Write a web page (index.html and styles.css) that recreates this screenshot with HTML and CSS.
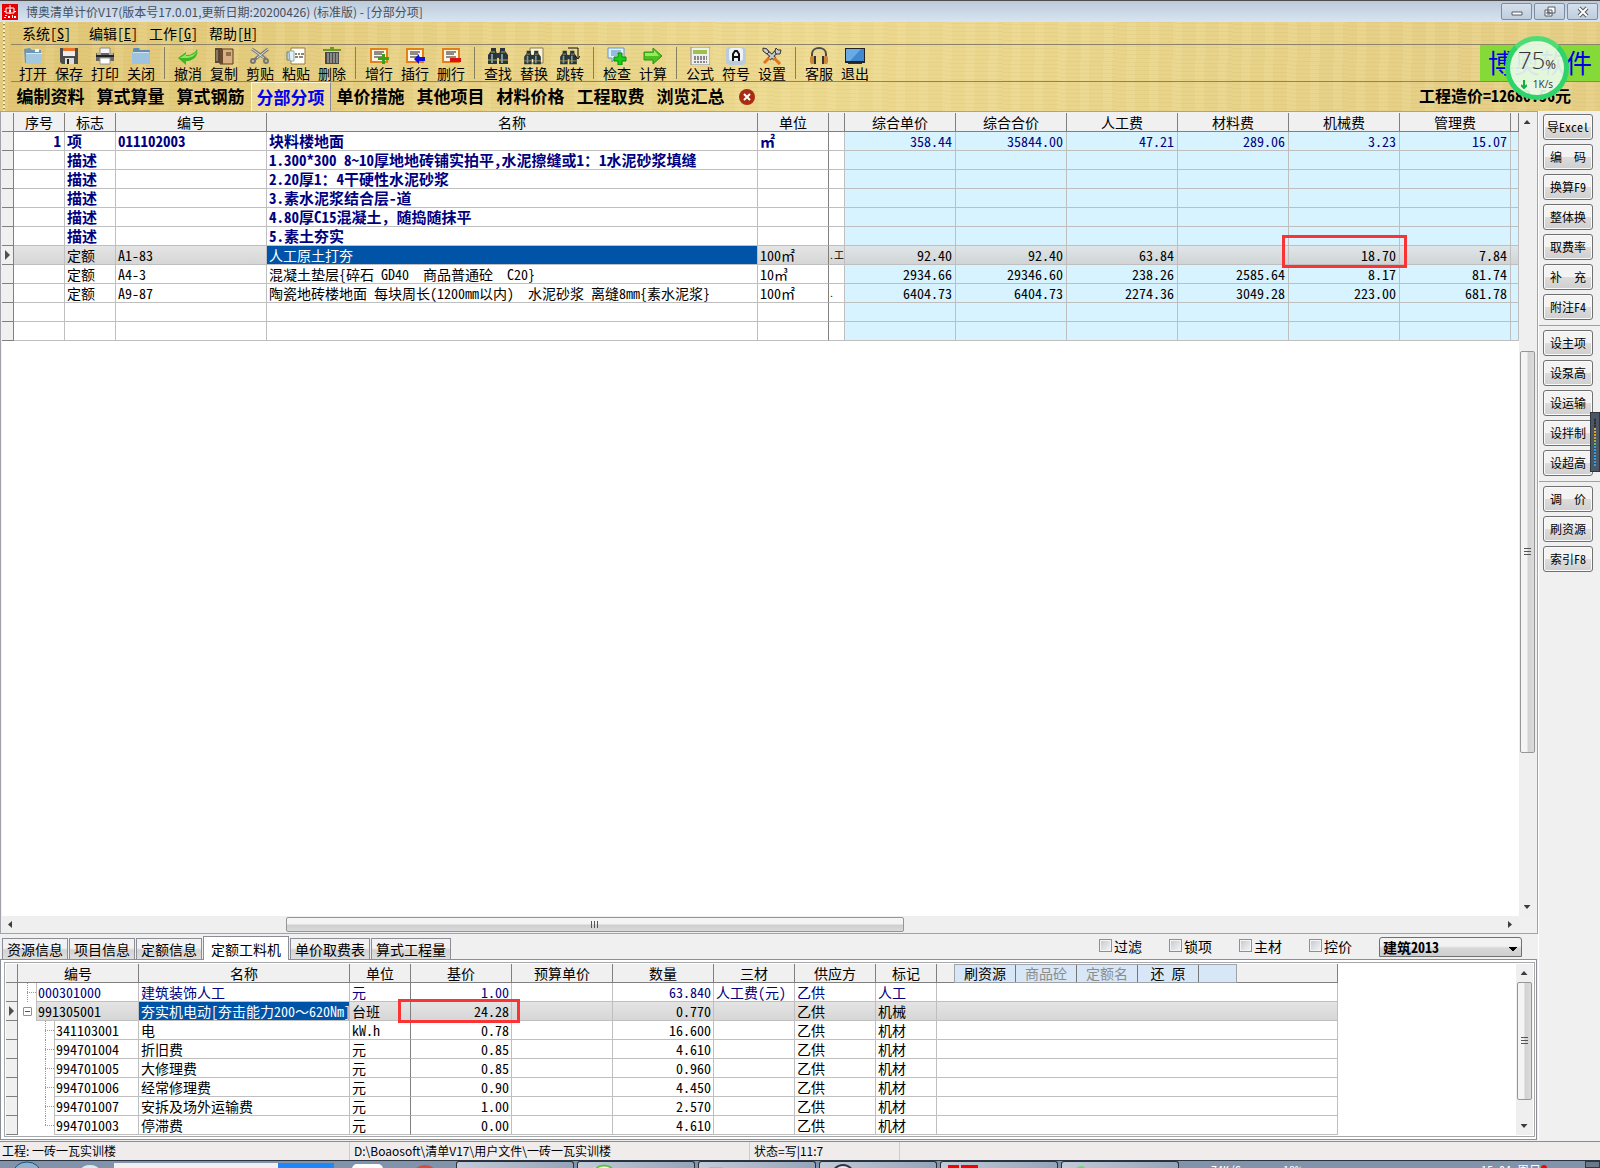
FILE: index.html
```html
<!DOCTYPE html>
<html lang="zh-CN">
<head>
<meta charset="utf-8">
<title>博奥清单计价V17</title>
<link rel="stylesheet" href="styles.css">
</head>
<body>
<svg class="sprite" aria-hidden="true">
  <symbol id="folder" viewBox="0 0 20 18"><path d="M2 3V2l1-1h5l1 2h9l1 1v12l-1 1H3l-1-1z" fill="#5e8db0"/><path d="M1 5h18v11l-1 1H2l-1-1z" fill="#9dc3de"/><path d="M2 5h16v1H2z" fill="#cfe3f1"/></symbol>
  <symbol id="open" viewBox="0 0 20 18"><path d="M1 2l6-1 2 2h9v13H2z" fill="#6d97b5"/><path d="M3 6h16l-1 11H3z" fill="#a4c8e1"/><path d="M12 2h4v3h-4z" fill="#eef5fa"/><path d="M3 6h16v1H3z" fill="#d6e8f4"/></symbol>
  <symbol id="save" viewBox="0 0 20 18"><path d="M1 1h18v16H3l-2-2z" fill="#4c4c4c"/><path d="M4 1h12v8H4z" fill="#eee"/><path d="M4 1h12v3H4z" fill="#e8742c"/><path d="M6 11h9v6H6z" fill="#ddd"/><path d="M8 12h2v5H8z" fill="#222"/></symbol>
  <symbol id="print" viewBox="0 0 20 18"><path d="M5 1h10v6H5z" fill="#f4f4f4" stroke="#888"/><path d="M1 6h18v8H1z" fill="#666"/><path d="M1 8h18v2H1z" fill="#222"/><path d="M5 11h10v6H5z" fill="#fff" stroke="#999"/><path d="M2 6h4v2H2zM14 6h4v2h-4z" fill="#aaa"/></symbol>
  <symbol id="undo" viewBox="0 0 20 18"><path d="M0 11l8-6v3c5 0 9-2 11-6 2 7-4 12-11 12v4z" fill="#3eb81f"/><path d="M2 11l6-4v2c5 0 9-2 11-5-2 5-6 7-11 7z" fill="#8fe568"/></symbol>
  <symbol id="copy" viewBox="0 0 20 18"><path d="M1 1h7v15H1z" fill="#5b4a3c"/><path d="M2 3h2v11H2z" fill="#8b7764"/><path d="M6 2h13v15H6z" fill="#d8b083" stroke="#5a3b1d"/><path d="M6 2h3v15H6z" fill="#6a4a2d"/><path d="M12 6h5M12 8h5" stroke="#4a2c10"/></symbol>
  <symbol id="cut" viewBox="0 0 20 18"><path d="M2 2l14 10M18 2L4 13" stroke="#7d7d7d" stroke-width="3"/><path d="M2 2l12 9M18 2L7 11" stroke="#dedede"/><circle cx="3" cy="14" r="2" fill="none" stroke="#777" stroke-width="2"/><circle cx="16" cy="14" r="2" fill="none" stroke="#777" stroke-width="2"/></symbol>
  <symbol id="paste" viewBox="0 0 20 18"><path d="M5 1h14v16H5z" fill="#fffef4" stroke="#9c7a3c"/><path d="M1 5h4v8H1z" fill="#bcd0de" stroke="#6c8294"/><path d="M3 4h5v10H4z" fill="#e6f0f7" stroke="#8aa"/><path d="M9 7h2m1 0h2m1 0h3M9 10h3m1 0h4" stroke="#111"/></symbol>
  <symbol id="trash" viewBox="0 0 20 18"><path d="M1 2h18v2H1zM8 0h4v2H8z" fill="#6b9a22"/><path d="M3 5h14v12H3z" fill="#4a4a4a"/><path d="M6 6v10M9 6v10M12 6v10M15 6v10" stroke="#c8c8c8"/></symbol>
  <symbol id="row" viewBox="0 0 20 18"><path d="M2 2h16v13H2z" fill="#fff5e4" stroke="#e2801a" stroke-width="2"/><path d="M5 5h10M5 7h8M5 10h10" stroke="#222"/></symbol>
  <symbol id="rowadd" viewBox="0 0 20 18"><use href="#row"/><path d="M13 7h3v3h4v3h-4v4h-3v-4H9v-3h4z" fill="#3aa11b"/></symbol>
  <symbol id="rowins" viewBox="0 0 20 18"><use href="#row"/><path d="M9 12l5-5v3h6v4h-6v3z" fill="#1010e0"/></symbol>
  <symbol id="rowdel" viewBox="0 0 20 18"><use href="#row"/><path d="M9 11h11v4H9z" fill="#e01010"/></symbol>
  <symbol id="bino" viewBox="0 0 20 18"><path d="M3 1h5v3l1 3v10H0V8l3-4zM12 1h5v3l3 4v9h-9V7l1-3z" fill="#27343b"/><path d="M8 6h4v5H8z" fill="#2c3a40"/><path d="M3 5h4M13 5h4M0 13h9M11 13h9" stroke="#b3a53a"/><path d="M4 7v9M14 7v9" stroke="#7d98a4" stroke-width="2"/></symbol>
  <symbol id="replace" viewBox="0 0 20 18"><path d="M6 1h13v15H6z" fill="#fff4cf" stroke="#8a7f5a"/><svg x="0" y="3" width="17" height="15"><use href="#bino"/></svg></symbol>
  <symbol id="jump" viewBox="0 0 20 18"><svg x="0" y="3" width="17" height="15"><use href="#bino"/></svg><path d="M8 1h10v10M15 9l3 3 2-3" fill="none" stroke="#111"/></symbol>
  <symbol id="check" viewBox="0 0 20 18"><path d="M1 1h16v10H8l-3 4v-4H1z" fill="#e4f1fb" stroke="#5d97c9"/><path d="M4 4h10M4 6h10M4 8h6" stroke="#4a86bb"/><path d="M11 6h4v4h4v4h-4v4h-4v-4H7v-4h4z" fill="#18d018" stroke="#0b8a0b"/></symbol>
  <symbol id="go" viewBox="0 0 20 18"><path d="M1 5h9V1l9 8-9 8v-4H1z" fill="#4cc11f" stroke="#2f9114"/><path d="M2 6h9V3l5 6H2z" fill="#98e866"/></symbol>
  <symbol id="calc" viewBox="0 0 20 18"><path d="M1 0h19v18H1z" fill="#efefef" stroke="#888"/><path d="M3 3h14v4H3z" fill="#9cc24c"/><path d="M4 10h13M4 12h13M4 15h13" stroke="#888" stroke-width="2" stroke-dasharray="2 1"/></symbol>
  <symbol id="sign" viewBox="0 0 20 18"><rect x="0" y="0" width="20" height="18" rx="4" fill="#b9cbdc"/><rect x="3" y="1" width="14" height="13" rx="3" fill="#edf3f8"/><path d="M7 14V7l2-3h2l2 3v7M7 10h6" fill="none" stroke="#111" stroke-width="2"/></symbol>
  <symbol id="tools" viewBox="0 0 20 18"><path d="M3 3l10 9M16 3l-9 9" stroke="#444" stroke-width="4"/><path d="M3 3l10 9M16 3l-9 9" stroke="#ccc" stroke-width="2"/><path d="M12 11l6 6M7 11l-5 5" stroke="#e4731d" stroke-width="3"/><path d="M1 1l4 1 2 3-2 2-4-3zM14 1l2 2 3 0-1 4-4 0-1-3z" fill="#ccc" stroke="#333"/></symbol>
  <symbol id="phone" viewBox="0 0 20 18"><path d="M3 12V7c0-8 14-8 14 0v5" fill="none" stroke="#4b4b4b" stroke-width="2"/><rect x="1" y="9" width="5" height="8" rx="2" fill="#c9863c"/><rect x="14" y="9" width="5" height="8" rx="2" fill="#c9863c"/><path d="M5 9h2v8H5zM13 9h2v8h-2z" fill="#333"/></symbol>
  <symbol id="screen" viewBox="0 0 20 18"><path d="M0 1h20v15H0z" fill="#222"/><path d="M1 2h18v12H1z" fill="#4089cf"/><path d="M1 2h15L5 14H1z" fill="#69abe4"/><path d="M3 16h14v1H3z" fill="#333"/></symbol>
</svg>

<header>
  <div class="titlebar">
    <svg class="appicon" viewBox="0 0 16 16"><path d="M0 0h16v16H0z" fill="#e80000"/><path d="M4 4h8v5H4zM8 1v9" fill="none" stroke="#fff"/><path d="M2 7h2v1H2zM12 7h2v1h-2zM7 6h2v2H7zM3 11h2v1H3zM2 13h2v1H2zM6 12h2v2H6zM10 11h1v3h-1zM12 12h2v2h-2z" fill="#fff"/></svg>
    <span class="caption">博奥清单计价V17(版本号17.0.01,更新日期:20200426) (标准版) - [分部分项]</span>
    <button class="win" aria-label="最小化"><svg viewBox="0 0 16 12"><path d="M3 6h10v3H3z" fill="#fff" stroke="#555b66"/></svg></button>
    <button class="win" aria-label="还原"><svg viewBox="0 0 16 12"><path d="M6 1h7v6H6zM3 4h7v6H3z" fill="#fff" stroke="#555b66"/><path d="M5 6h3v2H5z" fill="none" stroke="#555b66"/></svg></button>
    <button class="win" aria-label="关闭"><svg viewBox="0 0 16 12"><path d="M4 2l8 8M12 2l-8 8" stroke="#555b66" stroke-width="4"/><path d="M4 2l8 8M12 2l-8 8" stroke="#fff" stroke-width="2"/></svg></button>
  </div>
  <div class="gold">
    <div class="grip"></div>
    <div class="bars">
      <nav class="menu"><a href="#">系统[<u>S</u>]</a><a href="#">编辑[<u>E</u>]</a><a href="#">工作[<u>G</u>]</a><a href="#">帮助[<u>H</u>]</a></nav>
      <div class="tools">
        <div class="group"><button><svg><use href="#open"/></svg>打开</button><button><svg><use href="#save"/></svg>保存</button><button><svg><use href="#print"/></svg>打印</button><button><svg><use href="#folder"/></svg>关闭</button></div>
        <div class="group"><button><svg><use href="#undo"/></svg>撤消</button><button><svg><use href="#copy"/></svg>复制</button><button><svg><use href="#cut"/></svg>剪贴</button><button><svg><use href="#paste"/></svg>粘贴</button><button><svg><use href="#trash"/></svg>删除</button></div>
        <div class="group"><button><svg><use href="#rowadd"/></svg>增行</button><button><svg><use href="#rowins"/></svg>插行</button><button><svg><use href="#rowdel"/></svg>删行</button></div>
        <div class="group"><button><svg><use href="#bino"/></svg>查找</button><button><svg><use href="#replace"/></svg>替换</button><button><svg><use href="#jump"/></svg>跳转</button></div>
        <div class="group"><button><svg><use href="#check"/></svg>检查</button><button><svg><use href="#go"/></svg>计算</button></div>
        <div class="group"><button><svg><use href="#calc"/></svg>公式</button><button><svg><use href="#sign"/></svg>符号</button><button><svg><use href="#tools"/></svg>设置</button></div>
        <div class="group"><button><svg><use href="#phone"/></svg>客服</button><button><svg><use href="#screen"/></svg>退出</button></div>
        <div class="logo">博奥软件
          <div class="meter"><div class="load">75<small>%</small></div><div class="rate"><svg viewBox="0 0 6 9"><path d="M3 0v8M0 5l3 3 3-3" fill="none" stroke="#10b040" stroke-width="2"/></svg>1K/s</div></div>
        </div>
      </div>
      <nav class="sections"><a href="#">编制资料</a><a href="#">算式算量</a><a href="#">算式钢筋</a><a href="#" class="on">分部分项</a><a href="#">单价措施</a><a href="#">其他项目</a><a href="#">材料价格</a><a href="#">工程取费</a><a href="#">浏览汇总</a>
        <button class="close" aria-label="关闭页"><svg viewBox="0 0 16 16"><circle cx="8" cy="8" r="8" fill="#a82c12"/><path d="M5 5l6 6M11 5l-6 6" stroke="#fff" stroke-width="2"/></svg></button>
        <strong class="total">工程造价=12680.56元</strong>
      </nav>
    </div>
  </div>
</header>

<main>
  <div class="work">
    <section class="upper">
      <div class="view">
        <table class="grid main">
          <colgroup><col class="w12"><col class="w51"><col class="w51"><col class="w151"><col class="w491"><col class="w71"><col class="w16"><col class="w111"><col class="w111"><col class="w111"><col class="w111"><col class="w111"><col class="w111"><col></colgroup>
          <thead><tr><th></th><th>序号</th><th>标志</th><th>编号</th><th>名称</th><th>单位</th><th></th><th>综合单价</th><th>综合合价</th><th>人工费</th><th>材料费</th><th>机械费</th><th>管理费</th><th></th></tr></thead>
          <tbody>
            <tr class="item"><th></th><td class="n">1</td><td>项</td><td>011102003</td><td>块料楼地面</td><td>㎡</td><td></td><td>358.44</td><td>35844.00</td><td>47.21</td><td>289.06</td><td>3.23</td><td>15.07</td><td></td></tr>
            <tr class="item"><th></th><td></td><td>描述</td><td></td><td>1.300*300 8~10厚地地砖铺实拍平,水泥擦缝或1：1水泥砂浆填缝</td><td></td><td></td><td></td><td></td><td></td><td></td><td></td><td></td><td></td></tr>
            <tr class="item"><th></th><td></td><td>描述</td><td></td><td>2.20厚1：4干硬性水泥砂浆</td><td></td><td></td><td></td><td></td><td></td><td></td><td></td><td></td><td></td></tr>
            <tr class="item"><th></th><td></td><td>描述</td><td></td><td>3.素水泥浆结合层-道</td><td></td><td></td><td></td><td></td><td></td><td></td><td></td><td></td><td></td></tr>
            <tr class="item"><th></th><td></td><td>描述</td><td></td><td>4.80厚C15混凝土，随捣随抹平</td><td></td><td></td><td></td><td></td><td></td><td></td><td></td><td></td><td></td></tr>
            <tr class="item"><th></th><td></td><td>描述</td><td></td><td>5.素土夯实</td><td></td><td></td><td></td><td></td><td></td><td></td><td></td><td></td><td></td></tr>
            <tr class="current"><th><i class="pointer"></i></th><td></td><td>定额</td><td>A1-83</td><td class="picked">人工原土打夯</td><td>100㎡</td><td class="peek">.工</td><td>92.40</td><td>92.40</td><td>63.84</td><td></td><td class="marked">18.70<span class="mark"></span></td><td>7.84</td><td></td></tr>
            <tr><th></th><td></td><td>定额</td><td>A4-3</td><td>混凝土垫层{碎石 GD40  商品普通砼  C20}</td><td>10㎥</td><td></td><td>2934.66</td><td>29346.60</td><td>238.26</td><td>2585.64</td><td>8.17</td><td>81.74</td><td></td></tr>
            <tr><th></th><td></td><td>定额</td><td>A9-87</td><td>陶瓷地砖楼地面 每块周长(1200mm以内)  水泥砂浆 离缝8mm{素水泥浆}</td><td>100㎡</td><td class="peek">.</td><td>6404.73</td><td>6404.73</td><td>2274.36</td><td>3049.28</td><td>223.00</td><td>681.78</td><td></td></tr>
            <tr><th></th><td></td><td></td><td></td><td></td><td></td><td></td><td></td><td></td><td></td><td></td><td></td><td></td><td></td></tr>
            <tr><th></th><td></td><td></td><td></td><td></td><td></td><td></td><td></td><td></td><td></td><td></td><td></td><td></td><td></td></tr>
          </tbody>
        </table>
      </div>
      <div class="vbar"><i class="up"></i><div class="track before"></div><div class="thumb"><i class="lines"></i></div><div class="track after"></div><i class="down"></i></div>
      <div class="hbar"><i class="prev"></i><div class="track before"></div><div class="thumb"><i class="lines"></i></div><div class="track after"></div><i class="next"></i></div>
    </section>

    <div class="tabstrip">
      <div class="tabs"><button>资源信息</button><button>项目信息</button><button>定额信息</button><button class="on">定额工料机</button><button>单价取费表</button><button>算式工程量</button></div>
      <div class="filters"><label><input type="checkbox">过滤</label><label><input type="checkbox">锁项</label><label><input type="checkbox">主材</label><label><input type="checkbox">控价</label>
      <select aria-label="定额库"><option>建筑2013</option></select></div>
    </div>

    <section class="pane"><div class="inner">
      <div class="view">
      <table class="grid detail">
        <colgroup><col class="w12"><col class="w121"><col class="w211"><col class="w61"><col class="w101"><col class="w101"><col class="w101"><col class="w81"><col class="w81"><col class="w61"><col class="w401"></colgroup>
        <thead><tr><th></th><th>编号</th><th>名称</th><th>单位</th><th>基价</th><th>预算单价</th><th>数量</th><th>三材</th><th>供应方</th><th>标记</th><th class="actions"><div><button>刷资源</button><button disabled>商品砼</button><button disabled>定额名</button><button>还 原</button></div></th></tr></thead>
        <tbody>
          <tr class="labor"><th></th><td class="tree"><div><span class="branch first"></span><span class="code">000301000</span></div></td><td>建筑装饰人工</td><td>元</td><td>1.00</td><td></td><td>63.840</td><td>人工费(元)</td><td>乙供</td><td>人工</td><td></td></tr>
          <tr class="current"><th><i class="pointer"></i></th><td class="tree"><div><span class="branch root"><i class="minus"></i></span><span class="code">991305001</span></div></td><td class="picked">夯实机电动[夯击能力200～620Nm]</td><td>台班</td><td class="marked">24.28<span class="mark"></span></td><td></td><td>0.770</td><td></td><td>乙供</td><td>机械</td><td></td></tr>
          <tr><th></th><td class="tree"><div><span class="branch leaf"></span><span class="code">341103001</span></div></td><td>电</td><td>kW.h</td><td>0.78</td><td></td><td>16.600</td><td></td><td>乙供</td><td>机材</td><td></td></tr>
          <tr><th></th><td class="tree"><div><span class="branch leaf"></span><span class="code">994701004</span></div></td><td>折旧费</td><td>元</td><td>0.85</td><td></td><td>4.610</td><td></td><td>乙供</td><td>机材</td><td></td></tr>
          <tr><th></th><td class="tree"><div><span class="branch leaf"></span><span class="code">994701005</span></div></td><td>大修理费</td><td>元</td><td>0.85</td><td></td><td>0.960</td><td></td><td>乙供</td><td>机材</td><td></td></tr>
          <tr><th></th><td class="tree"><div><span class="branch leaf"></span><span class="code">994701006</span></div></td><td>经常修理费</td><td>元</td><td>0.90</td><td></td><td>4.450</td><td></td><td>乙供</td><td>机材</td><td></td></tr>
          <tr><th></th><td class="tree"><div><span class="branch leaf"></span><span class="code">994701007</span></div></td><td>安拆及场外运输费</td><td>元</td><td>1.00</td><td></td><td>2.570</td><td></td><td>乙供</td><td>机材</td><td></td></tr>
          <tr><th></th><td class="tree"><div><span class="branch leaf last"></span><span class="code">994701003</span></div></td><td>停滞费</td><td>元</td><td>0.00</td><td></td><td>4.610</td><td></td><td>乙供</td><td>机材</td><td></td></tr>
        </tbody>
      </table>
      </div>
      <div class="vbar"><i class="up"></i><div class="thumb"><i class="lines"></i></div><div class="track after"></div><i class="down"></i></div>
    </div></section>
  </div>

  <aside>
    <div class="stack"><button>导Excel</button><button>编　码</button><button>换算F9</button><button>整体换</button><button>取费率</button><button>补　充</button><button>附注F4</button></div>
    <div class="stack"><button>设主项</button><button>设泵高</button><button>设运输</button><button>设拌制</button><button>设超高</button><div class="level"><i></i></div></div>
    <div class="stack"><button>调　价</button><button>刷资源</button><button>索引F8</button></div>
  </aside>
</main>

<footer class="status"><span class="project">工程: 一砖一瓦实训楼</span><span class="path">D:\Boaosoft\清单V17\用户文件\一砖一瓦实训楼</span><span class="state">状态=写|11:7</span><span></span></footer>
<div class="taskbar">
  <svg class="launch" viewBox="0 0 114 8"><ellipse cx="27" cy="13" rx="14" ry="12" fill="#8fb3cf" stroke="#1d4f7c"/><ellipse cx="90" cy="9" rx="9" ry="5" fill="#d5ecf5"/></svg>
  <div class="search"></div><div class="go"></div>
  <svg class="pins" viewBox="0 0 122 8"><rect x="18" y="3" width="31" height="12" rx="5" fill="#fff"/><circle cx="91" cy="18" r="14" fill="#d94b3c"/></svg>
  <div class="task"></div>
  <div class="task"><svg viewBox="0 0 60 7"><ellipse cx="25" cy="10" rx="13" ry="6" fill="#eef5ee"/><path d="M18 6q8-5 16 0" stroke="#5ac43c" stroke-width="2" fill="none"/></svg></div>
  <div class="task"><svg viewBox="0 0 60 7"><path d="M10 5h14v2H10z" fill="#cdb36b"/></svg></div>
  <div class="task"><svg viewBox="0 0 60 7"><circle cx="23" cy="14" r="11" fill="#e8e8ee" stroke="#334" stroke-width="2"/></svg></div>
  <div class="task"><svg viewBox="0 0 60 7"><path d="M7 3h11v4H7zM20 3h17v4H20z" fill="#f00"/></svg></div>
  <div class="task"><svg viewBox="0 0 60 7"><circle cx="19" cy="10" r="6" fill="#5be36c"/></svg></div>
  <div class="tray"><span>74K/S</span><span>18%</span><span class="clock">15:04 周日</span><i class="dot"></i></div><div class="desk"></div>
</div>
</body>
</html>
```
FILE: styles.css
```css
* { box-sizing: border-box; }

body {
  margin: 0;
  min-height: 100vh;
  display: flex;
  flex-direction: column;
  overflow: hidden;
  background: #f0f0f0;
  color: #000;
  font: 14px/18px "Noto Sans Mono CJK SC", "Noto Sans CJK SC", "Liberation Mono", monospace;
}

button, select, input { font: inherit; color: inherit; margin: 0; }
button { padding: 0; border: 0; background: none; white-space: nowrap; }
a { color: inherit; text-decoration: none; white-space: nowrap; }
.sprite { display: none; }

/* title bar */
.titlebar {
  height: 22px;
  display: flex;
  align-items: center;
  gap: 2px;
  padding: 0 2px;
  border-top: 1px solid #4d4d50;
  background: linear-gradient(#bccada, #d8e4f1);
}
.appicon { width: 16px; height: 16px; }
.caption {
  flex: 1;
  padding-left: 6px;
  color: #44505e;
  font: 12px/18px "Noto Sans CJK SC", sans-serif;
}
.win {
  width: 31px;
  height: 17px;
  border: 1px solid #7d8ca0;
  border-radius: 2px;
  background: linear-gradient(#d5e0ec, #bfcddd);
  display: grid;
  place-items: center;
}
.win svg { width: 16px; height: 12px; }

/* gold tool area */
.gold {
  display: flex;
  background:
    repeating-linear-gradient(1deg, rgba(160, 120, 30, .06) 0 1px, transparent 1px 4px),
    repeating-linear-gradient(91deg, rgba(255, 245, 190, .12) 0 9px, transparent 9px 23px),
    linear-gradient(90deg, #e0c676, #ecd990 50%, #e4cd84);
}
.grip {
  width: 11px;
  background: repeating-linear-gradient(#f8edc2 0 2px, #a58e4d 2px 3px, transparent 3px 4px) 3px 0 / 2px 100% no-repeat;
}
.bars { flex: 1; min-width: 0; }
.menu {
  display: flex;
  gap: 11px;
  height: 23px;
  padding: 2px 11px 0;
  border-bottom: 1px solid #8d8467;
}
.menu a:first-child { margin-right: 7px; }
.tools {
  display: flex;
  height: 37px;
  padding-left: 4px;
  border-bottom: 1px solid #8d8467;
}
.group { display: flex; }
.group + .group::before {
  content: "";
  width: 1px;
  height: 32px;
  margin: 2px 5px;
  background: #85805f;
}
.group button {
  width: 36px;
  display: flex;
  flex-direction: column;
  align-items: center;
  font-size: 14px;
  line-height: 16px;
}
.group svg { width: 20px; height: 18px; margin-top: 2px; }
.logo {
  position: relative;
  margin-left: auto;
  width: 120px;
  height: 36px;
  background: #86da37;
  color: #0000e8;
  font-size: 26px;
  line-height: 34px;
  text-align: center;
  white-space: nowrap;
}
.meter {
  position: absolute;
  z-index: 2;
  left: 25px;
  top: -9px;
  width: 64px;
  height: 64px;
  border-radius: 50%;
  border: 5px solid #2ed36a;
  border-top-color: #4fdc75;
  background: rgba(236, 250, 232, .92);
  color: #333;
  font-family: "Open Sans", sans-serif;
}
.load { padding-top: 6px; font-size: 24px; line-height: 26px; font-weight: 300; }
.load small { font-size: 13px; font-weight: 400; }
.rate { display: flex; justify-content: center; align-items: center; gap: 6px; font-size: 10px; line-height: 14px; }
.rate svg { width: 6px; height: 9px; }
.sections {
  display: flex;
  align-items: stretch;
  height: 29px;
  font-size: 17px;
  line-height: 27px;
  font-weight: bold;
}
.sections a { width: 80px; padding-right: 1px; text-align: center; }
.sections .on {
  color: #0000f0;
  border: 1px solid #fff7d8;
  border-right-color: #8d8aa0;
  border-bottom: 0;
  background: rgba(255, 243, 200, .35);
}
.close { display: grid; place-items: center; width: 32px; }
.close svg { width: 16px; height: 16px; }
.total { margin: 0 29px 0 auto; font-size: 16px; }

/* work area */
main { flex: 1; display: flex; min-height: 0; }
.work { flex: 1; min-width: 0; display: flex; flex-direction: column; margin-bottom: 1px; }
.upper {
  flex: 1;
  display: grid;
  grid-template: 1fr 17px / 1fr 18px;
  padding: 1px 0 0 1px;
  border: 1px solid #a0a3ac;
}
.view { background: #fff; min-width: 0; overflow: hidden; }

.grid { border-collapse: separate; border-spacing: 0; table-layout: fixed; }
.main { width: 100%; }
.grid th, .grid td {
  height: 19px;
  padding: 0 3px 0 2px;
  border-right: 1px solid #bfbfbf;
  border-bottom: 1px solid #bfbfbf;
  font-weight: normal;
  line-height: 18px;
  white-space: pre;
  text-align: left;
}
.grid th {
  padding: 0;
  background: #f0f0f0;
  border-color: #808080;
  text-align: center;
}
.w12 { width: 12px; } .w16 { width: 16px; } .w51 { width: 51px; } .w61 { width: 61px; }
.w71 { width: 71px; } .w81 { width: 81px; } .w101 { width: 101px; } .w111 { width: 111px; }
.w121 { width: 121px; } .w151 { width: 151px; } .w211 { width: 211px; } .w401 { width: 401px; }
.w491 { width: 491px; }

.main td:nth-child(n+8) { background: #d7f3ff; text-align: right; }
.main td:nth-child(6) { border-right-color: #808080; }
.item td { color: #000080; font-weight: bold; font-size: 15px; }
.item td:nth-child(n+8) { font-weight: normal; font-size: 14px; }
.item .n { text-align: right; }
.grid .peek { padding: 0; font-size: 10px; }
.grid .current td { background: linear-gradient(#e4e4e4, #d6d6d6); }
.main .current td:nth-child(n+8) { background: linear-gradient(#e0e5e7, #cfd5d7); }
.grid .current .picked { background: #0054a8; color: #fff; }
.detail .picked { overflow: hidden; }
.pointer {
  display: block;
  width: 5px;
  height: 10px;
  margin: 0 3px;
  background: #505050;
  clip-path: polygon(0 0, 100% 50%, 0 100%);
}
.marked { position: relative; }
.mark {
  position: absolute;
  z-index: 1;
  inset: -11px -8px -4px -7px;
  border: 3px solid #fa3434;
}
.detail .mark { inset: -3px -9px -3px -13px; }

/* scroll bars */
.vbar, .hbar { display: flex; align-items: center; background: #efefef; }
.vbar { flex-direction: column; width: 17px; padding-right: 1px; }
.hbar { height: 17px; padding: 1px 0; }
.track { flex: 1; }
.vbar .thumb { width: 15px; display: grid; place-items: center; border: 1px solid #969696; border-radius: 2px; background: linear-gradient(90deg, #f4f4f4 45%, #d2d2d2 55%, #dcdcdc); }
.hbar .thumb { height: 100%; display: grid; place-items: center; border: 1px solid #969696; border-radius: 2px; background: linear-gradient(#f4f4f4 45%, #cfcfcf 55%, #dadada); }
.vbar .lines { width: 7px; height: 8px; background: repeating-linear-gradient(#555 0 1px, transparent 1px 3px); }
.hbar .lines { width: 8px; height: 7px; background: repeating-linear-gradient(90deg, #555 0 1px, transparent 1px 3px); }
.up, .down { width: 7px; height: 4px; margin: 7px 0; background: #3c3c3c; clip-path: polygon(50% 0, 100% 100%, 0 100%); }
.down { clip-path: polygon(0 0, 100% 0, 50% 100%); }
.prev, .next { width: 4px; height: 7px; margin: 0 7px 0 6px; background: #3c3c3c; clip-path: polygon(100% 0, 100% 100%, 0 50%); }
.next { clip-path: polygon(0 0, 100% 50%, 0 100%); }
.upper .vbar .before { flex: 220; }
.upper .vbar .thumb { flex: 401; }
.upper .vbar .after { flex: 145; }
.upper .hbar .before { flex: 267; }
.upper .hbar .thumb { flex: 616; }
.upper .hbar .after { flex: 598; }
.pane .thumb { flex: 118; }
.pane .after { flex: 17; }

/* detail tabs */
.tabstrip { display: flex; justify-content: space-between; height: 25px; padding: 0 16px 0 2px; }
.tabs { display: flex; align-items: flex-end; }
.tabs button {
  height: 21px;
  padding: 0 4px;
  margin-right: 1px;
  border: 1px solid #8b8e96;
  border-bottom: 0;
  background: linear-gradient(#f2f2f2 45%, #d4d4d4 55%, #dedede);
  line-height: 20px;
}
.tabs .on {
  position: relative;
  z-index: 1;
  height: 24px;
  padding: 0 7px;
  margin-bottom: -1px;
  background: #fff;
}
.filters { display: flex; align-items: center; }
.filters label { display: flex; align-items: center; gap: 2px; width: 70px; padding-bottom: 2px; }
.filters input {
  appearance: none;
  width: 13px;
  height: 13px;
  border: 1px solid #8e8f8f;
  outline: 1px solid #f4f4f4;
  outline-offset: -2px;
  background: linear-gradient(135deg, #c2c8cf, #f6f6f6);
}
.filters select {
  appearance: none;
  width: 143px;
  height: 20px;
  padding: 0 3px;
  border: 1px solid #707070;
  border-radius: 3px 3px 0 0;
  background:
    linear-gradient(to bottom left, #000 50%, transparent 51%) right 8px top 9px / 4px 4px no-repeat,
    linear-gradient(to bottom right, #000 50%, transparent 51%) right 4px top 9px / 4px 4px no-repeat,
    linear-gradient(#f2f2f2 45%, #d8d8d8 55%, #cecece);
  font-weight: bold;
  line-height: 18px;
}
.pane {
  padding: 2px 1px 2px 3px;
  margin-right: 1px;
  border: 1px solid #8b8e96;
  background: #fff;
}
.inner { display: flex; padding: 1px; border: 1px solid #a6a7ab; }
.inner .view { flex: 1; }
.detail { width: 1332px; }
.detail td:nth-child(4) { border-right-color: #808080; }
.detail td:nth-child(5), .detail td:nth-child(7) { text-align: right; padding-right: 2px; }
.labor td { color: #000080; }
.detail .tree, .detail .current .tree { padding: 0; border-bottom: 0; background: none; }
.tree div { display: flex; height: 19px; }
.branch {
  width: 18px;
  background:
    repeating-linear-gradient(#999 0 1px, transparent 1px 2px) 9px 0 / 1px 100% no-repeat,
    repeating-linear-gradient(90deg, #999 0 1px, transparent 1px 2px) 9px 9px / 9px 1px no-repeat;
}
.branch.leaf { width: 36px; background-position: 27px 0, 27px 9px; }
.branch.last { background-size: 1px 50%, 9px 1px; }
.branch.root { background: none; padding: 5px 0 0 5px; }
.minus {
  display: block;
  width: 9px;
  height: 9px;
  border: 1px solid #8f8f8f;
  border-radius: 1px;
  background: linear-gradient(#33539c, #33539c) 1px 3px / 5px 1px no-repeat #fff;
}
.code { flex: 1; padding-left: 1px; border-left: 1px solid #bfbfbf; border-bottom: 1px solid #bfbfbf; }
.current .code { background: linear-gradient(#e4e4e4, #d6d6d6); }
.grid .actions { padding: 0 0 0 17px; }
.actions div {
  display: flex;
  width: 283px;
  height: 19px;
  margin-bottom: -1px;
  border: 1px solid #a0a3a8;
  background: #d7e7f8;
}
.actions button { width: 61px; border-right: 1px solid #777; line-height: 17px; }
.actions button:disabled { color: #8c8c8c; }

/* side buttons */
aside { width: 62px; border-left: 1px solid #fff; }
.stack {
  position: relative;
  display: grid;
  gap: 4px;
  padding: 4px 7px 5px 4px;
  border-bottom: 1px solid #a0a0a0;
}
.stack:first-child { padding-top: 3px; }
.stack:last-child { border-bottom: 0; }
.stack button {
  height: 26px;
  border: 1px solid #707070;
  border-radius: 3px;
  background: linear-gradient(#f3f3f3 48%, #dcdcdc 52%, #cfcfcf);
  box-shadow: inset 0 0 0 1px #fafafa;
  font-size: 12px;
}
.level {
  position: absolute;
  z-index: 1;
  right: 0;
  top: 86px;
  width: 10px;
  height: 60px;
  padding: 5px 3px;
  border: 1px solid #2e353e;
  background: #4d5763;
}
.level i {
  display: block;
  height: 100%;
  background:
    repeating-linear-gradient(#3c4652 0 1px, transparent 1px 3px),
    linear-gradient(#27303a 20%, #e0a51e 20% 38%, #74b85a 55%, #2ea3e6 60%);
}

/* status and task bar */
.status {
  display: flex;
  height: 19px;
  border-top: 1px solid #8c8c90;
  background: #f0ecec;
  font: 12px/18px "Noto Sans CJK SC", sans-serif;
}
.status span { padding: 0 4px; border-right: 1px solid #cfcccc; }
.status .project { width: 350px; padding-left: 2px; }
.status .path { width: 400px; }
.status .state { width: 150px; }
.status span:last-child { flex: 1; border: 0; }
.taskbar {
  display: flex;
  height: 8px;
  overflow: hidden;
  border-top: 1px solid #2a3340;
  background: #8093ab;
}
.launch { width: 114px; height: 8px; }
.search { width: 164px; margin-top: 2px; background: #f0f0f0; }
.go { width: 56px; margin-top: 2px; background: #1e86fb; }
.pins { width: 122px; height: 8px; }
.task {
  flex: 0 1 118px;
  margin-right: 3px;
  border: 1px solid #27303c;
  border-bottom: 0;
  border-radius: 3px 3px 0 0;
  background: linear-gradient(90deg, #c2cbd8, #94a4b9);
}
.task svg { display: block; width: 60px; height: 7px; }
.tray { flex: 1; display: flex; gap: 42px; padding: 2px 38px 0 29px; color: #fff; font-size: 12px; line-height: 14px; }
.clock { margin-left: auto; }
.dot { width: 6px; height: 6px; margin: 2px 0 0 -42px; border-radius: 50%; background: #f00; }
.desk { width: 15px; border: 1px solid #2d3845; background: #6a7888; }
```
